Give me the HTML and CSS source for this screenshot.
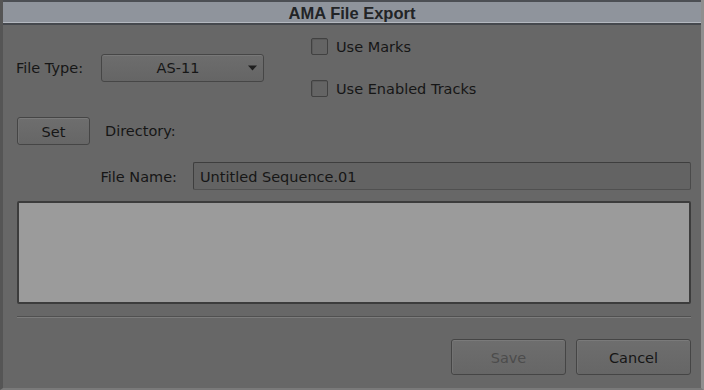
FILE: index.html
```html
<!DOCTYPE html>
<html>
<head>
<meta charset="utf-8">
<link rel="stylesheet" href="styles.css">
</head>
<body>
<div class="window">
  <div class="titlebar">AMA File Export</div>
  <div class="content">
    <div class="row-top">
      <div class="filetype">
        <span class="label ft-label">File Type:</span>
        <div class="dropdown">
          <span class="dd-text">AS-11</span>
          <svg class="dd-arrow" width="9" height="6" viewBox="0 0 9 6"><path d="M0 0.5 L9 0.5 L4.5 5.5 Z" fill="#1e1e1e"/></svg>
        </div>
      </div>
      <div class="checks">
        <label class="check"><span class="box"></span><span>Use Marks</span></label>
        <label class="check"><span class="box"></span><span>Use Enabled Tracks</span></label>
      </div>
    </div>
    <div class="row-dir">
      <div class="btn btn-set">Set</div>
      <span class="label">Directory:</span>
    </div>
    <div class="row-name">
      <span class="label name-label">File Name:</span>
      <div class="input">Untitled Sequence.01</div>
    </div>
    <div class="bigbox"></div>
    <div class="sep"></div>
    <div class="row-buttons">
      <div class="btn btn-action disabled">Save</div>
      <div class="btn btn-action">Cancel</div>
    </div>
  </div>
</div>
</body>
</html>
```

FILE: styles.css
```css
* { box-sizing: border-box; }
html, body { margin: 0; padding: 0; background: #676767; }
body {
  font-family: "DejaVu Sans", Tahoma, sans-serif;
  font-size: 14.5px;
  color: #161616;
}
.window {
  width: 704px;
  height: 390px;
  display: flex;
  flex-direction: column;
  background: #676767;
  border-left: 3px solid #555555;
  border-right: 3px solid #8f8f8f;
  border-bottom: 2px solid #7a7a7a;
}
.titlebar {
  height: 25px;
  background: #8f949c;
  border-top: 2px solid #4c4f54;
  border-bottom: 2px solid #45484d;
  box-shadow: inset 0 -1px 0 #b4b8bf;
  text-align: center;
  font-family: "Liberation Sans", Arial, sans-serif;
  font-weight: bold;
  font-size: 16.5px;
  line-height: 22px;
  color: #222426;
}
.content {
  flex: 1;
  display: flex;
  flex-direction: column;
  padding: 13px 10px 0 14px;
}
.row-top {
  display: flex;
  align-items: center;
}
.filetype {
  display: flex;
  align-items: center;
  width: 294px;
}
.ft-label { width: 85px; margin-left: -1px; padding-top: 1px; }
.dropdown {
  width: 163px;
  height: 28px;
  border: 1px solid #464646;
  border-radius: 3px;
  background: linear-gradient(#6d6d6d, #656565);
  box-shadow: inset 0 1px 0 #787878;
  display: flex;
  align-items: center;
  padding-top: 1px;
}
.dd-text { flex: 1; text-align: center; padding-left: 6px; }
.dd-arrow { margin-right: 6px; }
.checks {
  display: flex;
  flex-direction: column;
  gap: 25px;
}
.check {
  display: flex;
  align-items: center;
  gap: 8px;
  height: 17px;
}
.box {
  width: 17px;
  height: 17px;
  border: 1px solid #414141;
  border-radius: 2px;
  background: #646464;
  box-shadow: inset 1px 1px 0 #5a5a5a;
}
.row-dir {
  display: flex;
  align-items: center;
  margin-top: 20px;
  gap: 15px;
}
.btn {
  height: 28px;
  border: 1px solid #454545;
  border-radius: 3px;
  background: linear-gradient(#6e6e6e, #666666);
  box-shadow: inset 0 1px 0 #7a7a7a, inset 1px 0 0 #727272;
  display: flex;
  align-items: center;
  justify-content: center;
  padding-top: 2px;
}
.btn-set { width: 73px; }
.row-name {
  display: flex;
  align-items: center;
  margin-top: 17px;
}
.name-label { width: 160px; text-align: right; margin-right: 16px; padding-top: 2px; }
.input {
  flex: 1;
  height: 28px;
  border: 1px solid #3e3e3e;
  border-bottom-color: #505050;
  border-right-color: #4a4a4a;
  border-radius: 2px;
  background: #636363;
  display: flex;
  align-items: center;
  padding: 2px 0 0 6px;
}
.bigbox {
  height: 103px;
  margin-top: 11px;
  background: #9b9b9b;
  border: 2px solid #3c3c3c;
  border-radius: 2px;
}
.sep {
  margin-top: 12px;
  height: 2px;
  border-top: 1px solid #505050;
  border-bottom: 1px solid #7c7c7c;
}
.row-buttons {
  display: flex;
  justify-content: flex-end;
  gap: 10px;
  margin-top: 21px;
}
.btn-action { width: 115px; height: 36px; }
.disabled { color: #4c4c4c; }
```
